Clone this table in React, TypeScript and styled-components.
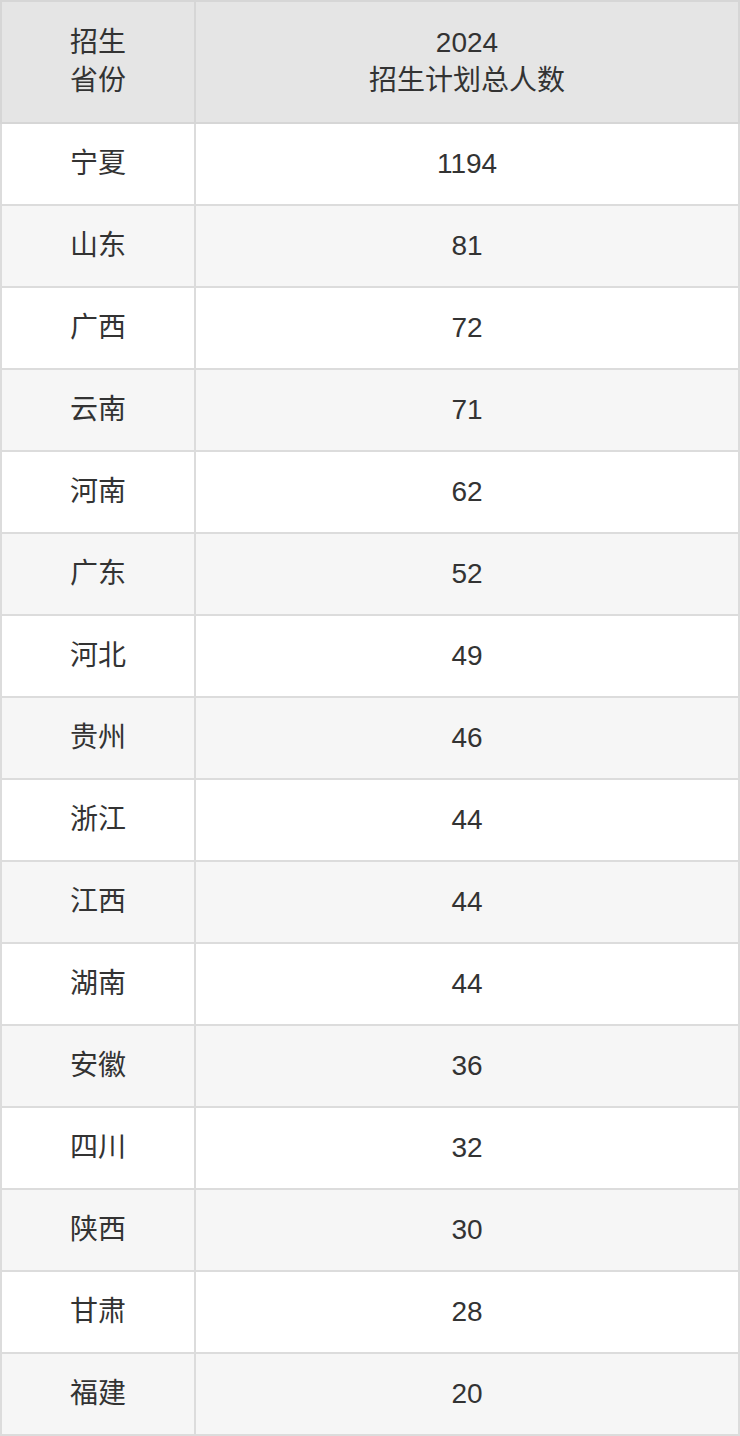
import styled, { createGlobalStyle } from 'styled-components';

const rows: [string, number][] = [
  ['宁夏', 1194],
  ['山东', 81],
  ['广西', 72],
  ['云南', 71],
  ['河南', 62],
  ['广东', 52],
  ['河北', 49],
  ['贵州', 46],
  ['浙江', 44],
  ['江西', 44],
  ['湖南', 44],
  ['安徽', 36],
  ['四川', 32],
  ['陕西', 30],
  ['甘肃', 28],
  ['福建', 20],
];

const GlobalStyle = createGlobalStyle`
  html, body {
    margin: 0;
    padding: 0;
    background: #fff;
  }
  body {
    font-family: "Liberation Sans", "Noto Sans CJK SC", sans-serif;
    color: #333;
  }
`;

const App = () => {
  return (
    <>
      <GlobalStyle />
      <Table>
        <colgroup>
          <col style={{ width: 194 }} />
          <col />
        </colgroup>
        <thead>
          <tr>
            <HeadCell>
              招生
              <br />
              省份
            </HeadCell>
            <HeadCell>
              2024
              <br />
              招生计划总人数
            </HeadCell>
          </tr>
        </thead>
        <tbody>
          {rows.map(([name, count], i) => (
            <Row key={name} striped={i % 2 === 1}>
              <Cell>{name}</Cell>
              <Cell>{count}</Cell>
            </Row>
          ))}
        </tbody>
      </Table>
    </>
  );
};

export default App;

const Table = styled.table`
  width: 740px;
  border-collapse: collapse;
  table-layout: fixed;
  font-size: 28px;
`;

const HeadCell = styled.th`
  height: 120px;
  padding: 0 10px;
  background: #e5e5e5;
  border: 2px solid #d6d6d6;
  font-weight: normal;
  line-height: 38px;
  text-align: center;
  color: #333;
  box-sizing: content-box;
`;

const Row = styled.tr<{ striped: boolean }>`
  background: ${(p) => (p.striped ? '#f6f6f6' : '#ffffff')};
`;

const Cell = styled.td`
  height: 80px;
  padding: 0 10px;
  border: 2px solid #dcdcdc;
  text-align: center;
  line-height: 38px;
  box-sizing: content-box;
`;
